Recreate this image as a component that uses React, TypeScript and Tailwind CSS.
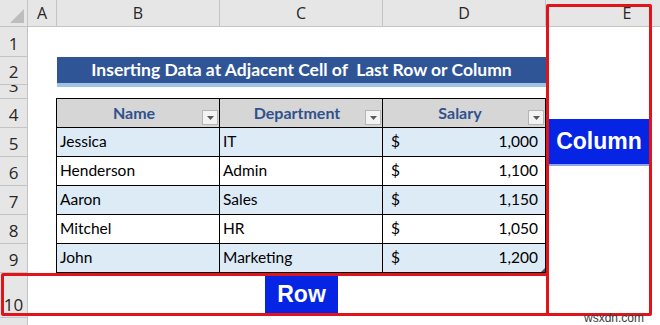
import React from 'react';

const cols = ['A', 'B', 'C', 'D', 'E'];
const rowNums = ['1', '2', '3', '4', '5', '6', '7', '8', '9', '10', ''];

const rows = [
  { name: 'Jessica', dept: 'IT', salary: '1,000' },
  { name: 'Henderson', dept: 'Admin', salary: '1,100' },
  { name: 'Aaron', dept: 'Sales', salary: '1,150' },
  { name: 'Mitchel', dept: 'HR', salary: '1,050' },
  { name: 'John', dept: 'Marketing', salary: '1,200' },
];

function FilterButton() {
  return (
    <div className="absolute right-[1px] bottom-[2px] w-[16px] h-[15px] bg-[#f3f3f3] border border-[#b5b5b5] flex items-center justify-center">
      <svg width="7" height="4" viewBox="0 0 7 4">
        <path d="M0 0h7L3.5 4z" fill="#595959" />
      </svg>
    </div>
  );
}

export default function App() {
  return (
    <div className="relative w-[660px] h-[325px] overflow-hidden bg-white font-['Lato','Liberation_Sans',sans-serif]">
      <div className="grid grid-cols-[28px_29px_163px_163px_163px_163px] grid-rows-[27px_30px_28px_14px_29px_29px_29px_29px_29px_29px_45px_20px]">
        {/* corner */}
        <div className="relative bg-[#e6e6e6] border-r border-b border-[#c4c4c4]">
          <svg className="absolute right-[3px] bottom-[3px]" width="14" height="14" viewBox="0 0 14 14">
            <path d="M14 0v14H0z" fill="#bdbdbd" />
          </svg>
        </div>
        {cols.map((c) => (
          <div key={c} className="bg-[#e6e6e6] border-r border-b border-[#c4c4c4] flex items-center justify-center text-[16px] text-[#262626] font-['Open_Sans','Liberation_Sans',sans-serif]">
            {c}
          </div>
        ))}

        {rowNums.map((n, i) => (
          <div
            key={i}
            style={{ gridRowStart: i + 2 }}
            className="col-start-1 bg-[#e6e6e6] border-r border-b border-[#c4c4c4] overflow-hidden flex items-end justify-center pb-[2px] text-[17px] leading-[20px] text-[#262626] font-['Open_Sans','Liberation_Sans',sans-serif]"
          >
            {n}
          </div>
        ))}

        {/* title */}
        <div className="col-start-3 col-span-3 row-start-3 self-start h-[30px] bg-[#2f5597] border-b-[4px] border-[#9dc3e6] flex items-center justify-center text-white font-bold text-[17.5px] whitespace-pre">
          Inserting Data at Adjacent Cell of  Last Row or Column
        </div>

        {/* table */}
        <div className="col-start-3 col-span-3 row-start-5 row-span-6 grid grid-cols-[163px_163px_163px] grid-rows-[29px_29px_29px_29px_29px_29px] border-t border-l border-black -mt-px -ml-px w-[490px] text-[15.5px] text-black">
          {['Name', 'Department', 'Salary'].map((h) => (
            <div key={h} className="relative bg-[#d6d6d6] border-r border-b border-black flex items-center justify-center font-bold text-[16px] text-[#30518d]">
              <span className="-translate-x-[4px]">{h}</span>
              <FilterButton />
            </div>
          ))}
          {rows.map((r, i) => {
            const bg = i % 2 === 0 ? 'bg-[#ddebf7]' : 'bg-white';
            return (
              <React.Fragment key={r.name}>
                <div className={`${bg} border-r border-b border-black flex items-center px-[3px]`}>{r.name}</div>
                <div className={`${bg} border-r border-b border-black flex items-center px-[3px]`}>{r.dept}</div>
                <div className={`${bg} relative border-r border-b border-black flex items-center justify-between pl-[8px] pr-[7px]`}>
                  <span>$</span>
                  <span>{r.salary}</span>
                  {i === rows.length - 1 && (
                    <svg className="absolute right-0 bottom-0" width="4" height="4" viewBox="0 0 4 4">
                      <path d="M4 0v4H0z" fill="#44546a" />
                    </svg>
                  )}
                </div>
              </React.Fragment>
            );
          })}
        </div>
      </div>

      {/* highlight boxes */}
      <div className="absolute left-[546px] top-[4px] w-[106px] h-[312px] border-[3px] border-[#e1141c] rounded-[2px]" />
      <div className="absolute left-[1px] top-[273px] w-[548px] h-[43px] border-[3px] border-[#e1141c] rounded-[2px]" />

      {/* labels */}
      <div className="absolute left-[549px] top-[119px] w-[100px] h-[47px] bg-[#0524e4] border-b-[2px] border-[#8fa3f0] flex items-center justify-center text-white font-bold text-[23px] font-['Liberation_Sans',sans-serif]">
        Column
      </div>
      <div className="absolute left-[265px] top-[276px] w-[73px] h-[37px] bg-[#0524e4] flex items-center justify-center text-white font-bold text-[23px] font-['Liberation_Sans',sans-serif]">
        Row
      </div>

      <div className="absolute left-[584px] top-[309px] text-[12px] text-[#3a3a3a] font-['Liberation_Sans',sans-serif]">
        wsxdn.com
      </div>
    </div>
  );
}
